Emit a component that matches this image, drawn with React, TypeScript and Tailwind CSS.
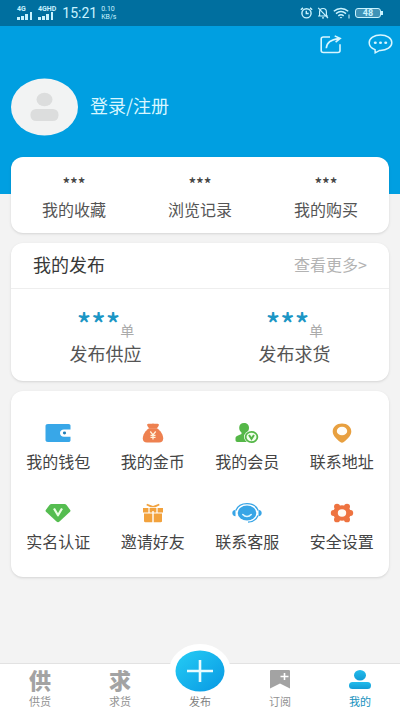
import type { ReactNode } from "react";

function SignalIcon({ wide = false }: { wide?: boolean }) {
  return (
    <div className="flex flex-col items-start">
      <span className="text-[7px] leading-[7px] font-bold">{wide ? "4GHD" : "4G"}</span>
      <svg width="17" height="8" viewBox="0 0 17 8" fill="currentColor" className="-mt-px">
        <rect x="0" y="5" width="3" height="3" />
        <rect x="4" y="4" width="3" height="4" />
        <rect x="8" y="2" width="3" height="6" />
        <rect x="13" y="0" width="2" height="8" />
      </svg>
    </div>
  );
}

function AlarmIcon() {
  return (
    <svg width="13" height="12" viewBox="0 0 13 12" fill="none" stroke="currentColor" strokeWidth="1.4">
      <ellipse cx="6.5" cy="6.3" rx="4.6" ry="4.6" />
      <path d="M6.3 3.8v2.7h2.4M.8 2.8 3 .9M12.2 2.8 10 .9" />
    </svg>
  );
}

function MuteIcon() {
  return (
    <svg width="12" height="12" viewBox="0 0 12 12" fill="none" stroke="currentColor" strokeWidth="1.2">
      <path d="M2.6 8.8V4.9C2.6 2.8 4 1.5 6 1.5s3.4 1.3 3.4 3.4v3.9M1 9h10M1.2.8l9.8 10.4M5 10.8h2" />
    </svg>
  );
}

function WifiIcon() {
  return (
    <svg width="18" height="12" viewBox="0 0 18 12" fill="none" stroke="currentColor" strokeWidth="1.5">
      <path d="M.8 4.2c4.2-3.6 10.2-3.6 14.4 0M3 6.6c3-2.4 7-2.4 10 0M5.3 8.8c1.7-1.3 3.7-1.3 5.4 0" />
      <path d="M6.6 10 8 11.5 9.4 10z" fill="currentColor" stroke="none" />
      <path d="M16 7.5v4" opacity=".7" />
    </svg>
  );
}

function StatusBar() {
  return (
    <div className="flex h-[26px] items-center justify-between bg-[#006f9f] px-[17px] font-[Roboto,sans-serif] text-[#c9f3ff]">
      <div className="flex items-center gap-1">
        <SignalIcon />
        <SignalIcon wide />
        <span className="ml-0.5 text-sm leading-5">15:21</span>
        <span className="flex flex-col text-[7px] leading-[8px]">
          <span>0.10</span>
          <span>KB/s</span>
        </span>
      </div>
      <div className="flex items-center gap-1">
        <AlarmIcon />
        <MuteIcon />
        <WifiIcon />
        <div className="flex items-center">
          <span className="flex h-[10px] w-[26px] items-center justify-center rounded-[3px] border border-current bg-[#3f93b7] text-[9px] leading-none font-bold">
            48
          </span>
          <span className="h-1 w-[2px] bg-current" />
        </div>
      </div>
    </div>
  );
}

function ShareIcon() {
  return (
    <svg width="22" height="19" viewBox="0 0 22 19" fill="none" stroke="currentColor" strokeWidth="1.6">
      <path d="M10 2H3.4C2 2 1.2 2.7 1.2 4v11.5c0 1.3.8 2 2.2 2h14.4c1.3 0 2.2-.7 2.2-2V9.2" />
      <path d="M6.3 13.2c.3-5 3.8-8.6 12.6-9.6M14.7.9l5.5 2.6-4.6 3.6" />
    </svg>
  );
}

function MessageIcon() {
  return (
    <svg width="25" height="20" viewBox="0 0 25 20" fill="none" stroke="currentColor" strokeWidth="1.5">
      <path d="M12.5 1C6.2 1 1.2 4.3 1.2 8.7c0 3 2.3 5.6 5.8 6.9l.2 3.2 4.4-2.4h.9c6.3 0 11.3-3.3 11.3-7.7S18.8 1 12.5 1z" />
      <g fill="currentColor" stroke="none">
        <ellipse cx="7.3" cy="8.8" rx="1.5" ry="1.3" />
        <ellipse cx="12.5" cy="8.8" rx="1.5" ry="1.3" />
        <ellipse cx="17.7" cy="8.8" rx="1.5" ry="1.3" />
      </g>
    </svg>
  );
}

function WalletIcon() {
  return (
    <svg width="26" height="20" viewBox="0 0 26 20">
      <path
        d="M3 1h20.5c1.3 0 2 .7 2 1.8V6.5H19c-2.4 0-4 1.4-4 3.5s1.6 3.7 4 3.7h6.5v3.5c0 1.1-.7 1.8-2 1.8H3c-1.7 0-2.5-.7-2.5-2V3C.5 1.7 1.3 1 3 1z"
        fill="#38a7e8"
      />
      <ellipse cx="19.5" cy="10" rx="1.6" ry="1.4" fill="#1f7fb8" />
    </svg>
  );
}

function CoinIcon() {
  return (
    <svg width="22" height="20" viewBox="0 0 22 20">
      <path d="M5 1.5C7 .2 8.5 1.3 11 .5c2.5.8 4-.3 6 1-.3 1.6-1.3 3-2.6 4H7.6C6.3 4.5 5.3 3.1 5 1.5z" fill="#ee8150" />
      <path d="M7 5.300h8c3.700 2.500 6.200 6.500 6.200 10.200 0 2.800-1.500 4-4.200 4H5c-2.700 0-4.200-1.200-4.200-4 0-3.700 2.500-7.700 6.200-10.200z" fill="#ee8150" />
      <path d="m8.300 8.500 2.700 3.300 2.700-3.300M11 11.500v5M8.500 12.400h5M8.500 14.400h5" fill="none" stroke="#fff3dc" strokeWidth="1.3" />
    </svg>
  );
}

function MemberIcon() {
  return (
    <svg width="24" height="20" viewBox="0 0 24 20">
      <path d="M9 0c3 0 5 2 5 4.800 0 2-.8 3.600-2.200 4.800v1.200l3.200 1.500V19H2.500C1.100 19 .5 18.300.5 17v-1.700c0-1.300.7-2 2-2.500l4-1.900V9.600C5 8.400 4.200 6.800 4.200 4.800 4.200 2 6 0 9 0z" fill="#55b748" />
      <ellipse cx="16.5" cy="14" rx="7.5" ry="6.5" fill="#fff" />
      <ellipse cx="16.5" cy="14" rx="5.9" ry="5.1" fill="#f2ffed" stroke="#55b748" strokeWidth="1.8" />
      <path d="m14 12 2.500 3.900L19 12" fill="none" stroke="#55b748" strokeWidth="2" />
    </svg>
  );
}

function PinIcon() {
  return (
    <svg width="20" height="20" viewBox="0 0 20 20">
      <path d="M10 .5c5.300 0 9.300 3.500 9.300 8 0 4.400-4 7.600-7.500 10.500-1.200 1-2.400 1-3.600 0C4.700 16.100.7 12.900.7 8.500c0-4.500 4-8 9.300-8z" fill="#e8a040" />
      <ellipse cx="10" cy="8" rx="5.2" ry="4.3" fill="#fffdf8" />
    </svg>
  );
}

function VerifyIcon() {
  return (
    <svg width="26" height="20" viewBox="0 0 26 20">
      <path d="M6.500 1h13c.9 0 1.500.3 2 .9l3.700 5c.5.700.4 1.300-.2 1.900l-10.500 9.700c-1 .9-2 .9-3 0L1 8.800C.4 8.200.3 7.600.8 6.900l3.700-5c.5-.6 1.100-.9 2-.9z" fill="#55bd50" />
      <path d="m9 5.500 4 6.800 4-6.800" fill="none" stroke="#eaffe2" strokeWidth="2.2" strokeLinejoin="round" />
    </svg>
  );
}

function GiftIcon() {
  return (
    <svg width="20" height="20" viewBox="0 0 20 20" fill="#f2a23d">
      <path d="M4 .8 10 3l6-2.200.6 1.400L12.500 4.200h-5L3.400 2.200z" />
      <path d="M0 4.900h5.400v4.500H0zM6.600 4.900h6.800v4.500h-2.700V8H9.300v1.400H6.600zM14.600 4.900H20v4.500h-5.400z" />
      <path d="M1 10.500h8.300v8.700H2.200C1.400 19.200 1 18.800 1 18zM10.700 10.500H19V18c0 .8-.4 1.200-1.200 1.200h-7.100z" />
    </svg>
  );
}

function ServiceIcon() {
  return (
    <svg width="30" height="20" viewBox="0 0 30 20">
      <ellipse cx="15" cy="10" rx="9.3" ry="7.5" fill="#38a5e6" />
      <path d="M4 7.500C5.500 3.200 9.500.7 15 .7s9.500 2.500 11 6.800M26 12.500c-1.500 4-4.500 6.500-10 6.700" fill="none" stroke="#38a5e6" strokeWidth="1.3" />
      <path d="M3.500 6.700v6.600C1.500 13 .3 11.800.3 10s1.200-3 3.200-3.300zM26.500 6.700v6.600c2-.3 3.200-1.500 3.200-3.300s-1.200-3-3.200-3.300z" fill="#38a5e6" />
      <path d="M10.800 11.500c2.400 2.700 6 2.700 8.400 0" fill="none" stroke="#dff6ff" strokeWidth="1.6" strokeLinecap="round" />
    </svg>
  );
}

function GearIcon() {
  return (
    <svg width="24" height="20" viewBox="0 0 24 20">
      <g fill="#ee7340">
        <ellipse cx="12" cy="10" rx="9" ry="7.8" />
        <ellipse cx="7" cy="3.6" rx="3" ry="2.9" />
        <ellipse cx="17" cy="3.6" rx="3" ry="2.9" />
        <ellipse cx="7" cy="16.4" rx="3" ry="2.9" />
        <ellipse cx="17" cy="16.4" rx="3" ry="2.9" />
        <ellipse cx="3.5" cy="10" rx="2.7" ry="2.9" />
        <ellipse cx="20.5" cy="10" rx="2.7" ry="2.9" />
      </g>
      <ellipse cx="12" cy="10" rx="4.2" ry="3.7" fill="#fff9f3" />
    </svg>
  );
}

const stats = ["我的收藏", "浏览记录", "我的购买"];

const posts = ["发布供应", "发布求货"];

const services: { label: string; icon: ReactNode }[] = [
  { label: "我的钱包", icon: <WalletIcon /> },
  { label: "我的金币", icon: <CoinIcon /> },
  { label: "我的会员", icon: <MemberIcon /> },
  { label: "联系地址", icon: <PinIcon /> },
  { label: "实名认证", icon: <VerifyIcon /> },
  { label: "邀请好友", icon: <GiftIcon /> },
  { label: "联系客服", icon: <ServiceIcon /> },
  { label: "安全设置", icon: <GearIcon /> },
];

function NavItem({ label, active = false, children }: { label: string; active?: boolean; children: ReactNode }) {
  return (
    <a
      href="#"
      className={`flex flex-1 flex-col items-center justify-end pb-1 text-[11px] leading-3 ${
        active ? "text-[#1691bd]" : "text-[#929292]"
      }`}
    >
      <span className="flex h-6 items-center justify-center">{children}</span>
      <span className="mt-1">{label}</span>
    </a>
  );
}

function BottomNav() {
  return (
    <nav className="mt-auto flex h-12 border-t border-[#e2e2e2] bg-white">
      <NavItem label="供货">
        <span className="text-[22px] leading-6 font-black text-[#a3a3a3]">供</span>
      </NavItem>
      <NavItem label="求货">
        <span className="text-[22px] leading-6 font-black text-[#a3a3a3]">求</span>
      </NavItem>
      <a href="#" className="flex flex-1 flex-col items-center justify-end pb-1 text-[11px] leading-3 text-[#808080]">
        <svg width="64" height="56" viewBox="0 0 64 56" className="-mb-1 shrink-0">
          <defs>
            <linearGradient id="plus" x1="0" y1="0" x2="1" y2="1">
              <stop offset="0" stopColor="#25cdf5" />
              <stop offset="1" stopColor="#0898e3" />
            </linearGradient>
          </defs>
          <ellipse cx="32" cy="28" rx="31" ry="27" fill="#fff" />
          <ellipse cx="32" cy="28" rx="24.5" ry="20.5" fill="url(#plus)" />
          <path d="M19 28h26M32 17v22" stroke="#e9fcff" strokeWidth="2.6" />
        </svg>
        <span className="relative">发布</span>
      </a>
      <NavItem label="订阅">
        <svg width="22" height="19" viewBox="0 0 22 19">
          <path d="M2.500 0h17c1 0 1.500.4 1.500 1.300v17.200l-10-5-10 5V1.300C1 .4 1.500 0 2.500 0z" fill="#a3a3a3" />
          <path d="M11.500 6.500h8M15.500 3v7" stroke="#fff" strokeWidth="1.6" />
        </svg>
      </NavItem>
      <NavItem label="我的" active>
        <svg width="22" height="19" viewBox="0 0 22 19">
          <defs>
            <linearGradient id="user" x1="0" y1="0" x2="0" y2="1">
              <stop offset="0" stopColor="#23bcec" />
              <stop offset="1" stopColor="#129bd5" />
            </linearGradient>
          </defs>
          <ellipse cx="11" cy="5.2" rx="6" ry="5.2" fill="url(#user)" />
          <rect x="0" y="12" width="22" height="7" rx="3.5" fill="url(#user)" />
        </svg>
      </NavItem>
    </nav>
  );
}

export default function App() {
  return (
    <div className="flex min-h-screen flex-col bg-[#f3f3f3] font-['Noto_Sans_CJK_SC',sans-serif] text-base text-[#555]">
      <header className="bg-[#009fe1] pb-[58px] text-[#d8f6ff]">
        <StatusBar />
        <div className="flex h-9 items-center justify-end gap-[26px] pr-[7px]">
          <button type="button" aria-label="分享">
            <ShareIcon />
          </button>
          <button type="button" aria-label="消息">
            <MessageIcon />
          </button>
        </div>
        <div className="mt-4 flex items-center gap-3 px-[11px]">
          <svg width="67" height="58" viewBox="0 0 67 58">
            <ellipse cx="33.5" cy="29" rx="33.5" ry="28.5" fill="#f2f3f3" />
            <ellipse cx="33.5" cy="21.5" rx="8" ry="6.8" fill="#dcdddd" />
            <rect x="19.5" y="31" width="28" height="12" rx="5.5" fill="#dcdddd" />
          </svg>
          <a href="#" className="pb-1 text-lg leading-6">
            登录/注册
          </a>
        </div>
      </header>

      <main className="-mt-[37px] flex flex-col gap-[10px] px-[11px] pb-4">
        <section className="grid grid-cols-3 rounded-xl bg-white pt-4 pb-3 shadow-sm">
          {stats.map((label) => (
            <a key={label} href="#" className="flex flex-col items-center gap-1">
              <span className="leading-5 font-medium text-[#444]">***</span>
              <span className="leading-6">{label}</span>
            </a>
          ))}
        </section>

        <section className="rounded-xl bg-white shadow-sm">
          <div className="flex h-[46px] items-center justify-between border-b border-[#eee] px-[22px] pb-1">
            <h2 className="text-lg text-[#383838]">我的发布</h2>
            <a href="#" className="text-[#b3b3b3]">
              查看更多&gt;
            </a>
          </div>
          <div className="grid grid-cols-2 pt-[18px] pb-[14px]">
            {posts.map((label) => (
              <a key={label} href="#" className="flex flex-col items-center">
                <span className="flex h-8 items-baseline">
                  <span className="text-3xl leading-8 font-medium text-[#1c96c5]">***</span>
                  <span className="text-sm leading-4 text-[#aaa]">单</span>
                </span>
                <span className="text-lg leading-7">{label}</span>
              </a>
            ))}
          </div>
        </section>

        <section className="grid grid-cols-4 gap-y-[30px] rounded-xl bg-white pt-8 pb-6 shadow-sm">
          {services.map(({ label, icon }) => (
            <a key={label} href="#" className="flex flex-col items-center gap-1.5 leading-6 text-[#444]">
              {icon}
              <span>{label}</span>
            </a>
          ))}
        </section>
      </main>

      <BottomNav />
    </div>
  );
}
